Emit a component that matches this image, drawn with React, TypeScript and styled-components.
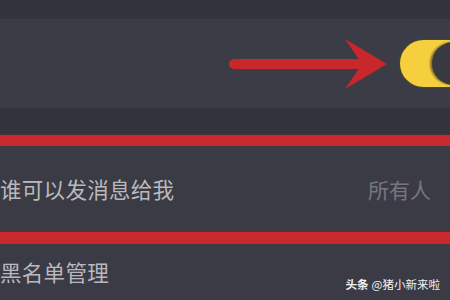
import styled, { createGlobalStyle } from 'styled-components';

const GlobalStyle = createGlobalStyle`
    html, body {
        margin: 0;
        padding: 0;
        background: #34343d;
    }
`;

const Page = styled.div`
    position: relative;
    width: 450px;
    height: 300px;
    overflow: hidden;
    background: #34343d;
    font-family: 'Noto Sans CJK SC', 'Noto Sans', sans-serif;
`;

const TopGap = styled.div`
    height: 19px;
`;

const ToggleRow = styled.div`
    height: 89px;
    background: #3c3c46;
    display: flex;
    align-items: center;
    justify-content: flex-end;
    overflow: hidden;
`;

const SectionGap = styled.div`
    height: 27px;
`;

const RedLine = styled.div<{ thickness: number }>`
    height: ${(props) => props.thickness}px;
    background: #c7292c;
    box-shadow: 0 0 2px 1px rgba(120, 40, 60, 0.6);
`;

const SettingRow = styled.div<{ rowHeight: number }>`
    height: ${(props) => props.rowHeight}px;
    background: #3b3b45;
    display: flex;
    align-items: center;
    justify-content: space-between;
    padding: 0 19px 0 0;
`;

const LastRow = styled(SettingRow)`
    align-items: flex-start;
    padding-top: 17px;
    box-sizing: border-box;
`;

const Label = styled.span`
    color: #b9b9bd;
    font-size: 21.5px;
    line-height: 22px;
    letter-spacing: 0.3px;
`;

const Value = styled.span`
    color: #77777d;
    font-size: 21px;
    line-height: 22px;
`;

const Toggle = styled.div`
    flex-shrink: 0;
    position: relative;
    width: 96px;
    height: 47px;
    margin-left: 12px;
    margin-right: -46px;
    border-radius: 24px;
    background: #f5cf3d;
    box-shadow: 0 0 1px 1px rgba(90, 80, 30, 0.5);
`;

const Knob = styled.div`
    position: absolute;
    left: 32px;
    top: 2px;
    width: 43px;
    height: 43px;
    border-radius: 50%;
    background: #393941;
    box-shadow: -2px 0 2px rgba(0, 0, 0, 0.45);
`;

const Watermark = styled.div`
    position: absolute;
    right: 10px;
    bottom: 8px;
    color: #f2f2f2;
    font-size: 11.5px;
    line-height: 16px;
    display: flex;
    gap: 3px;
`;

const WatermarkBrand = styled.span`
    font-weight: 700;
`;

const Arrow = () => (
    <svg width="160" height="50" viewBox="0 0 160 50" style={{ flexShrink: 0 }}>
        <line x1="6" y1="25" x2="140" y2="25" stroke="#c8282c" strokeWidth="10" strokeLinecap="round" />
        <polygon points="117,0 159,25 117,50 134,25" fill="#c8282c" />
    </svg>
);

const App = () => {
    return (
        <Page>
            <GlobalStyle />
            <TopGap />
            <ToggleRow>
                <Arrow />
                <Toggle>
                    <Knob />
                </Toggle>
            </ToggleRow>
            <SectionGap />
            <RedLine thickness={11} />
            <SettingRow rowHeight={86}>
                <Label>谁可以发消息给我</Label>
                <Value>所有人</Value>
            </SettingRow>
            <RedLine thickness={12} />
            <LastRow rowHeight={56}>
                <Label>黑名单管理</Label>
            </LastRow>
            <Watermark>
                <WatermarkBrand>头条</WatermarkBrand>
                <span>@猪小新来啦</span>
            </Watermark>
        </Page>
    );
};

export default App;
